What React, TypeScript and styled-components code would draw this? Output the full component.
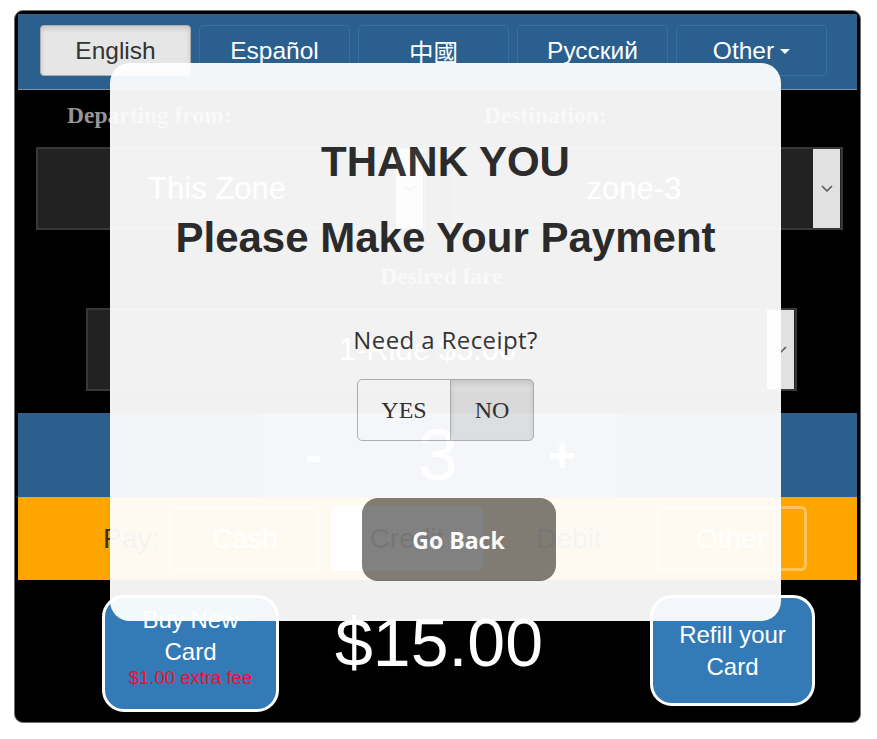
import React from "react";
import styled, { createGlobalStyle } from "styled-components";

const Global = createGlobalStyle`
  html, body { margin: 0; padding: 0; background: #ffffff; }
  body { font-family: "Liberation Sans", Arial, sans-serif; }
  * { box-sizing: border-box; }
`;

const Page = styled.div`
  padding: 10px 0 0 14px;
`;

const Frame = styled.div`
  position: relative;
  width: 847px;
  border: 1px solid #6e6e6e;
  padding: 3px;
  background: #000;
  border-radius: 9px;
  display: flex;
  flex-direction: column;
`;

const Header = styled.div`
  height: 76px;
  background: #2a5f8e;
  border-bottom: 1px solid #7f93a8;
  padding: 11px 0 0 22px;
  display: grid;
  grid-template-columns: repeat(5, 151px);
  column-gap: 8px;
  align-items: start;
`;

const Tab = styled.div<{ $active?: boolean }>`
  height: 51px;
  border-radius: 4px;
  border: 1px solid ${(p) => (p.$active ? "#adadad" : "#3470a5")};
  background: ${(p) => (p.$active ? "#e6e6e6" : "#2a5f8e")};
  box-shadow: ${(p) => (p.$active ? "inset 0 3px 5px rgba(0,0,0,0.13)" : "none")};
  color: ${(p) => (p.$active ? "#333" : "#fff")};
  font-family: "Liberation Sans", "Noto Sans CJK TC", Arial, sans-serif;
  font-size: 24.5px;
  display: flex;
  align-items: center;
  justify-content: center;
  padding-top: 1px;
`;

const Caret = styled.span`
  display: inline-block;
  width: 0;
  height: 0;
  margin-left: 6px;
  border-top: 5px solid #fff;
  border-left: 5px solid transparent;
  border-right: 5px solid transparent;
`;

const ZoneSection = styled.div`
  height: 323px;
  background: #000;
  display: flex;
  flex-direction: column;
`;

const ZoneGrid = styled.div`
  display: grid;
  grid-template-columns: 1fr 1fr;
  column-gap: 27px;
  padding: 12px 14px 0 18px;
`;

const Column = styled.div`
  display: flex;
  flex-direction: column;
`;

const FieldLabel = styled.div<{ $center?: boolean }>`
  font-family: "Liberation Serif", "Times New Roman", serif;
  font-weight: bold;
  font-size: 23.5px;
  line-height: 26px;
  color: #969696;
  padding-left: ${(p) => (p.$center ? "0" : "31px")};
  text-align: ${(p) => (p.$center ? "center" : "left")};
`;

const SelectBox = styled.div`
  height: 83px;
  background: #222;
  border: 2px solid #383838;
  display: flex;
  align-items: stretch;
  padding: 0 1px 0 0;
`;

const SelectText = styled.div`
  flex: 1;
  display: flex;
  align-items: center;
  justify-content: center;
  color: #fff;
  font-size: 31px;
`;

const ArrowBox = styled.div`
  width: 27px;
  background: #e1e1e1;
  display: flex;
  align-items: center;
  justify-content: center;
`;

const FareBlock = styled.div`
  display: flex;
  flex-direction: column;
  padding: 33px 60px 0 68px;
  gap: 19px;
`;

const ZoneSelectWrap = styled.div`
  margin-top: 19px;
`;

const CounterRow = styled.div`
  height: 84px;
  background: #2a5f8e;
  display: flex;
  justify-content: center;
  align-items: stretch;
`;

const CounterCell = styled.div<{ $w: number; $big?: boolean }>`
  width: ${(p) => p.$w}px;
  display: flex;
  align-items: center;
  justify-content: center;
  color: #fff;
  background: ${(p) => (p.$big ? "rgba(255,255,255,0.06)" : "rgba(255,255,255,0.1)")};
  font-size: ${(p) => (p.$big ? "72px" : "48px")};
  font-weight: ${(p) => (p.$big ? "normal" : "bold")};
`;

const PayRow = styled.div`
  height: 83px;
  background: #ffa500;
  display: grid;
  grid-template-columns: 141px repeat(4, 152px);
  column-gap: 10px;
  align-items: center;
`;

const PayLabel = styled.div`
  color: #333;
  font-size: 28px;
  text-align: right;
`;

const PayButton = styled.div<{ $kind: "outline" | "solid" | "plain" }>`
  height: 65px;
  border-radius: 6px;
  display: flex;
  align-items: center;
  justify-content: center;
  font-size: 28px;
  border: 3px solid
    ${(p) => (p.$kind === "outline" ? "rgba(255,255,255,0.35)" : "transparent")};
  background: ${(p) => (p.$kind === "solid" ? "#fff" : "transparent")};
  color: ${(p) => (p.$kind === "outline" ? "#fff" : "#333")};
`;

const BottomRow = styled.div`
  height: 139px;
  display: grid;
  grid-template-columns: 261px 1fr 261px;
  align-items: start;
  padding-top: 15px;
`;

const CardButton = styled.div<{ $h: number; $w: number; $side: "start" | "end" }>`
  width: ${(p) => p.$w}px;
  height: ${(p) => p.$h}px;
  justify-self: end;
  margin-right: ${(p) => (p.$side === "end" ? "42px" : "0")};
  background: #337ab7;
  border: 3px solid #fff;
  border-radius: 22px;
  color: #fff;
  font-size: 24px;
  line-height: 32px;
  text-align: center;
  display: flex;
  flex-direction: column;
  justify-content: ${(p) => (p.$side === "end" ? "center" : "flex-start")};
  padding-top: ${(p) => (p.$side === "end" ? "0" : "6px")};
`;

const Fee = styled.div`
  color: #ea1230;
  font-size: 18.5px;
  line-height: 19px;
`;

const Price = styled.div`
  color: #fff;
  font-size: 68px;
  line-height: 94px;
  text-align: center;
  padding-left: 3px;
`;

const Modal = styled.div`
  position: absolute;
  left: 95px;
  top: 52px;
  width: 671px;
  height: 558px;
  background: #fff;
  opacity: 0.945;
  border-radius: 20px;
  padding-top: 75px;
  display: flex;
  flex-direction: column;
  align-items: center;
`;

const Title = styled.h1<{ $gap: number }>`
  margin: ${(p) => p.$gap}px 0 0;
  font-family: "Liberation Sans", Arial, sans-serif;
  font-weight: bold;
  font-size: 42px;
  line-height: 48px;
  color: #2d2d2d;
`;

const Question = styled.div`
  margin-top: 62px;
  font-family: "Open Sans", sans-serif;
  font-size: 24px;
  line-height: 32px;
  letter-spacing: 0.4px;
  color: #333;
`;

const Toggle = styled.div`
  margin-top: 23px;
  display: flex;
  height: 62px;
`;

const ToggleButton = styled.div<{ $active?: boolean; $w: number; $pos: "l" | "r" }>`
  width: ${(p) => p.$w}px;
  display: flex;
  align-items: center;
  justify-content: center;
  font-family: "Liberation Serif", "Times New Roman", serif;
  font-size: 24px;
  color: #333;
  border: 1px solid #b3b3b3;
  margin-left: ${(p) => (p.$pos === "r" ? "-1px" : "0")};
  border-radius: ${(p) => (p.$pos === "l" ? "5px 0 0 5px" : "0 5px 5px 0")};
  background: ${(p) => (p.$active ? "#e6e6e6" : "#fff")};
  box-shadow: ${(p) => (p.$active ? "inset 0 3px 5px rgba(0,0,0,0.1)" : "none")};
`;

const GoBack = styled.div`
  margin-top: 57px;
  margin-left: 26px;
  width: 194px;
  height: 83px;
  border-radius: 16px;
  background: #7a7a7a;
  color: #fff;
  font-family: "Open Sans", sans-serif;
  font-weight: bold;
  font-size: 23px;
  display: flex;
  align-items: center;
  justify-content: center;
`;

const Chevron = () => (
  <svg width="12" height="8" viewBox="0 0 12 8">
    <polyline points="1,1 6,6 11,1" fill="none" stroke="#555" strokeWidth="1.5" />
  </svg>
);

const Select = ({ text }: { text: string }) => (
  <SelectBox>
    <SelectText>{text}</SelectText>
    <ArrowBox>
      <Chevron />
    </ArrowBox>
  </SelectBox>
);

export default function App() {
  return (
    <>
      <Global />
      <Page>
        <Frame>
          <Header>
            <Tab $active>English</Tab>
            <Tab>Español</Tab>
            <Tab>中國</Tab>
            <Tab>Русский</Tab>
            <Tab>
              Other
              <Caret />
            </Tab>
          </Header>
          <ZoneSection>
            <ZoneGrid>
              <Column>
                <FieldLabel>Departing from:</FieldLabel>
                <ZoneSelectWrap>
                  <Select text="This Zone" />
                </ZoneSelectWrap>
              </Column>
              <Column>
                <FieldLabel>Destination:</FieldLabel>
                <ZoneSelectWrap>
                  <Select text="zone-3" />
                </ZoneSelectWrap>
              </Column>
            </ZoneGrid>
            <FareBlock>
              <FieldLabel $center>Desired fare</FieldLabel>
              <Select text="1-Ride $5.00" />
            </FareBlock>
          </ZoneSection>
          <CounterRow>
            <CounterCell $w={112}>-</CounterCell>
            <CounterCell $w={137} $big>
              3
            </CounterCell>
            <CounterCell $w={111}>+</CounterCell>
          </CounterRow>
          <PayRow>
            <PayLabel>Pay:</PayLabel>
            <PayButton $kind="outline">Cash</PayButton>
            <PayButton $kind="solid">Credit</PayButton>
            <PayButton $kind="plain">Debit</PayButton>
            <PayButton $kind="outline">Other</PayButton>
          </PayRow>
          <BottomRow>
            <CardButton $w={177} $h={117} $side="start">
              <div>Buy New</div>
              <div>Card</div>
              <Fee>$1.00 extra fee</Fee>
            </CardButton>
            <Price>$15.00</Price>
            <CardButton $w={165} $h={111} $side="end">
              <div>Refill your</div>
              <div>Card</div>
            </CardButton>
          </BottomRow>
          <Modal>
            <Title $gap={0}>THANK YOU</Title>
            <Title $gap={28}>Please Make Your Payment</Title>
            <Question>Need a Receipt?</Question>
            <Toggle>
              <ToggleButton $w={94} $pos="l">
                YES
              </ToggleButton>
              <ToggleButton $w={84} $pos="r" $active>
                NO
              </ToggleButton>
            </Toggle>
            <GoBack>Go Back</GoBack>
          </Modal>
        </Frame>
      </Page>
    </>
  );
}
